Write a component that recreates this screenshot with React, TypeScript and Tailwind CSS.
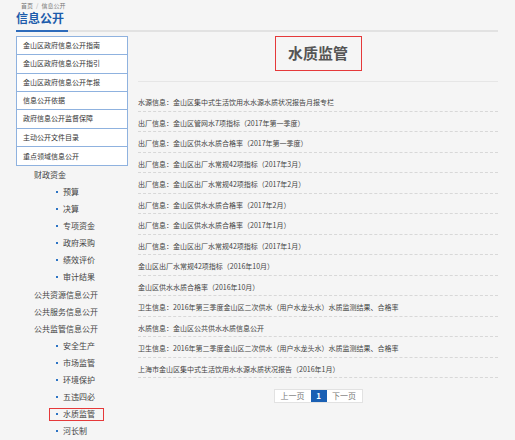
const menu = [
  "金山区政府信息公开指南",
  "金山区政府信息公开指引",
  "金山区政府信息公开年报",
  "信息公开依据",
  "政府信息公开监督保障",
  "主动公开文件目录",
  "重点领域信息公开",
];

type TreeItem = { label: string; sub?: boolean; active?: boolean };

const tree: TreeItem[] = [
  { label: "财政资金" },
  { label: "预算", sub: true },
  { label: "决算", sub: true },
  { label: "专项资金", sub: true },
  { label: "政府采购", sub: true },
  { label: "绩效评价", sub: true },
  { label: "审计结果", sub: true },
  { label: "公共资源信息公开" },
  { label: "公共服务信息公开" },
  { label: "公共监管信息公开" },
  { label: "安全生产", sub: true },
  { label: "市场监管", sub: true },
  { label: "环境保护", sub: true },
  { label: "五违四必", sub: true },
  { label: "水质监管", sub: true, active: true },
  { label: "河长制", sub: true },
];

const articles = [
  "水源信息：金山区集中式生活饮用水水源水质状况报告月报专栏",
  "出厂信息：金山区管网水7项指标（2017年第一季度）",
  "出厂信息：金山区供水水质合格率（2017年第一季度）",
  "出厂信息：金山区出厂水常规42项指标（2017年3月）",
  "出厂信息：金山区出厂水常规42项指标（2017年2月）",
  "出厂信息：金山区供水水质合格率（2017年2月）",
  "出厂信息：金山区供水水质合格率（2017年1月）",
  "出厂信息：金山区出厂水常规42项指标（2017年1月）",
  "金山区出厂水常规42项指标（2016年10月）",
  "金山区供水水质合格率（2016年10月）",
  "卫生信息：2016年第三季度金山区二次供水（用户水龙头水）水质监测结果、合格率",
  "水质信息：金山区公共供水水质信息公开",
  "卫生信息：2016年第二季度金山区二次供水（用户水龙头水）水质监测结果、合格率",
  "上海市金山区集中式生活饮用水水源水质状况报告（2016年1月）",
];

export default function App() {
  return (
    <div
      className="h-[440px] w-[515px] overflow-hidden bg-[#f5f5f5] text-[#444]"
      style={{ fontFamily: '"Noto Sans CJK SC", "Noto Sans", sans-serif' }}
    >
      <div className="ml-[16px] w-[482px]">
        {/* header */}
        <div className="flex h-[10px] items-center pl-[5px] pt-[2px] text-[6px] leading-none text-[#777]">
          首页 <span className="mx-[3px] text-[#aaa]">/</span> 信息公开
        </div>
        <div className="h-[20px] text-[12px] font-bold leading-[16px] text-[#1d5cab]">
          信息公开
        </div>
        <div className="flex h-[2px] bg-[#e2e2e2]">
          <div className="w-[52px] bg-[#2d6bbb]" />
        </div>

        <div className="mt-[4px] flex gap-[10px]">
          {/* left column */}
          <div className="w-[112px] shrink-0">
            <div className="border border-[#8fb2df] bg-white">
              {menu.map((m, i) => (
                <div
                  key={m}
                  className={`flex h-[18.33px] items-center pl-[6px] text-[7px] leading-none text-[#333] ${
                    i < menu.length - 1 ? "border-b border-[#8fb2df]" : ""
                  }`}
                >
                  {m}
                </div>
              ))}
            </div>
            <div>
              {tree.map((t) => (
                <div key={t.label} className="flex h-[17.1px] items-center text-[8px] leading-none">
                  {t.sub ? (
                    <div
                      className={`ml-[33px] flex h-[13px] items-center pl-[6px] ${
                        t.active ? "w-[55px] border border-[#e5393a]" : "border border-transparent"
                      }`}
                    >
                      <span className="mr-[5px] h-[2px] w-[2px] bg-[#2d74c4]" />
                      <span>{t.label}</span>
                    </div>
                  ) : (
                    <span className="ml-[18px]">{t.label}</span>
                  )}
                </div>
              ))}
            </div>
          </div>

          {/* right column */}
          <div className="w-[360px]">
            <div className="flex justify-center">
              <div className="flex h-[35px] w-[87px] items-center justify-center border border-[#e5393a] text-[15px] font-bold text-[#555]">
                水质监管
              </div>
            </div>
            <div className="mt-[10px] h-px bg-[#e6e6e6]" />
            <div className="mt-[9px]">
              {articles.map((a, i) => (
                <div
                  key={i}
                  className="flex h-[20.54px] items-end border-b border-dashed border-[#d8d8d8] pb-[3.5px] text-[7px] leading-[10px] text-[#444]"
                >
                  {a}
                </div>
              ))}
            </div>
            <div className="mt-[11px] flex justify-center">
              <div className="flex h-[14px] border border-[#e2e2e2] bg-white text-[8px] leading-none">
                <span className="flex w-[36px] items-center justify-center text-[#777]">上一页</span>
                <span className="flex w-[16px] items-center justify-center bg-[#1a60b4] font-bold text-white">
                  1
                </span>
                <span className="flex w-[35px] items-center justify-center text-[#777]">下一页</span>
              </div>
            </div>
          </div>
        </div>
      </div>
    </div>
  );
}
